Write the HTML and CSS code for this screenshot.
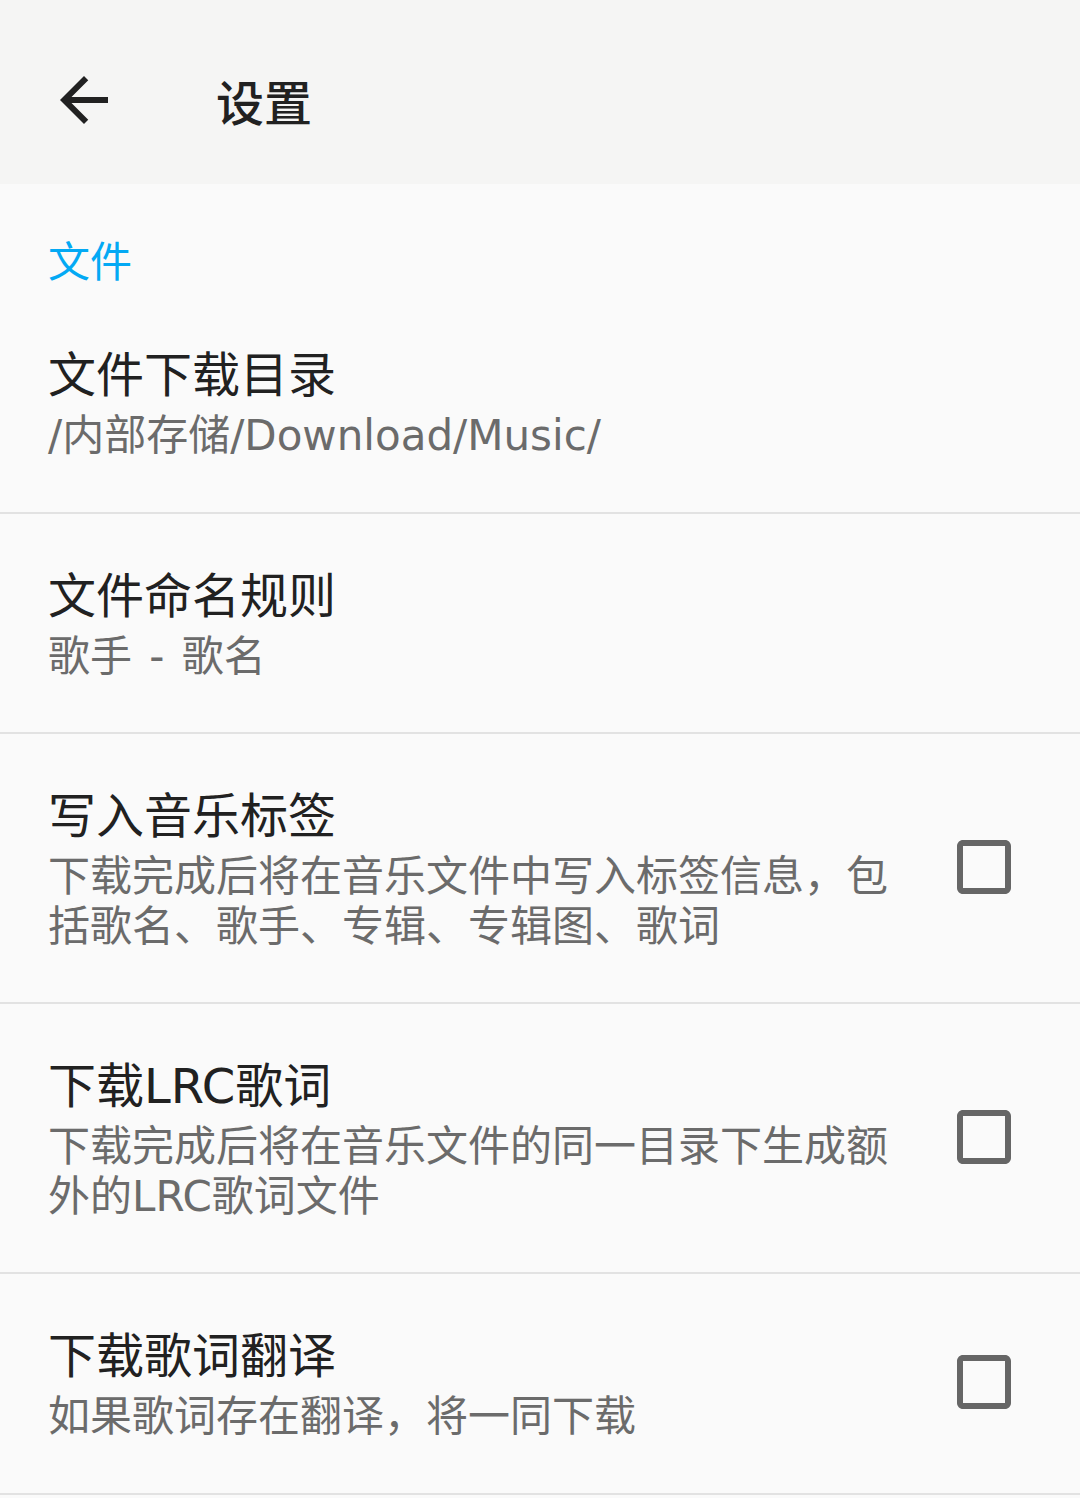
FILE: index.html
```html
<!DOCTYPE html>
<html lang="zh-CN">
<head>
  <meta charset="UTF-8">
  <meta name="viewport" content="width=device-width, initial-scale=1.0">
  <title>设置</title>
  <link rel="stylesheet" href="styles.css">
</head>
<body>
  <!-- 顶部栏 -->
  <header class="toolbar">
    <svg class="back-icon" viewBox="0 0 24 24" width="72" height="72">
      <path d="M20 11H7.83l5.59-5.59L12 4l-8 8 8 8 1.41-1.41L7.83 13H20v-2z"/>
    </svg>
    <div class="toolbar-title">设置</div>
  </header>

  <div class="category">文件</div>

  <div class="pref">
    <div class="pref-text">
      <div class="pref-title">文件下载目录</div>
      <div class="pref-summary">/内部存储/Download/Music/</div>
    </div>
  </div>

  <div class="pref">
    <div class="pref-text">
      <div class="pref-title">文件命名规则</div>
      <div class="pref-summary">歌手 - 歌名</div>
    </div>
  </div>

  <div class="pref">
    <div class="pref-text">
      <div class="pref-title">写入音乐标签</div>
      <div class="pref-summary">下载完成后将在音乐文件中写入标签信息，包括歌名、歌手、专辑、专辑图、歌词</div>
    </div>
    <svg class="checkbox" viewBox="0 0 24 24" width="72" height="72">
      <path d="M19 5v14H5V5h14m0-2H5c-1.1 0-2 .9-2 2v14c0 1.1.9 2 2 2h14c1.1 0 2-.9 2-2V5c0-1.1-.9-2-2-2z"/>
    </svg>
  </div>

  <div class="pref">
    <div class="pref-text">
      <div class="pref-title">下载LRC歌词</div>
      <div class="pref-summary">下载完成后将在音乐文件的同一目录下生成额外的LRC歌词文件</div>
    </div>
    <svg class="checkbox" viewBox="0 0 24 24" width="72" height="72">
      <path d="M19 5v14H5V5h14m0-2H5c-1.1 0-2 .9-2 2v14c0 1.1.9 2 2 2h14c1.1 0 2-.9 2-2V5c0-1.1-.9-2-2-2z"/>
    </svg>
  </div>

  <div class="pref">
    <div class="pref-text">
      <div class="pref-title">下载歌词翻译</div>
      <div class="pref-summary">如果歌词存在翻译，将一同下载</div>
    </div>
    <svg class="checkbox" viewBox="0 0 24 24" width="72" height="72">
      <path d="M19 5v14H5V5h14m0-2H5c-1.1 0-2 .9-2 2v14c0 1.1.9 2 2 2h14c1.1 0 2-.9 2-2V5c0-1.1-.9-2-2-2z"/>
    </svg>
  </div>
</body>
</html>
```

FILE: styles.css
```css
body {
  margin: 0;
  font-family: "DejaVu Sans", "Noto Sans CJK SC", sans-serif;
  background-color: #fafafa;
  color: #212121;
  overflow: hidden;
}

.toolbar {
  display: flex;
  align-items: center;
  height: 168px;
  padding-top: 16px;
  background-color: #f5f5f4;
}

.back-icon {
  margin-left: 48px;
  fill: #212121;
}

.toolbar-title {
  margin-left: 96px;
  font-family: "Noto Sans CJK SC", sans-serif;
  font-size: 48px;
  font-weight: 500;
  color: #212121;
}

/* 分类标题 */
.category {
  padding: 54px 48px 5px;
  font-size: 42px;
  line-height: 50px;
  color: #03a9f4;
}

.pref {
  display: flex;
  align-items: center;
  padding: 49px 60px 51px 48px;
  border-bottom: 2px solid #e2e2e2;
}

.pref-text {
  flex: 1;
}

.pref-title {
  font-size: 48px;
  line-height: 66px;
  color: #212121;
}

.pref-summary {
  margin-top: 3px;
  font-size: 42px;
  line-height: 49.5px;
  word-spacing: 4px;
  color: #6b6b6b;
}

.checkbox {
  flex-shrink: 0;
  margin-left: 50px;
  fill: #666666;
}
```
